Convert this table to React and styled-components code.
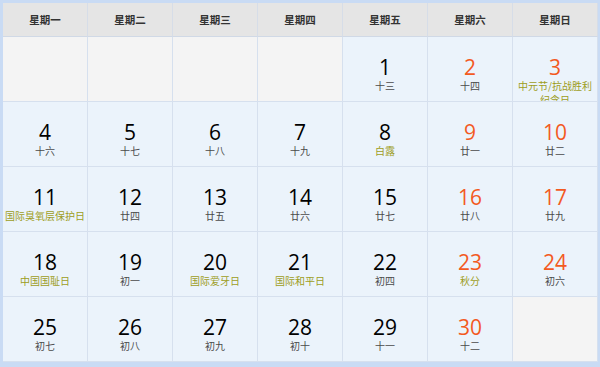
import React from "react"
import styled, { createGlobalStyle } from "styled-components"

const GlobalStyle = createGlobalStyle`
  html, body {
    margin: 0;
    padding: 0;
    background: #ffffff;
  }
  body {
    font-family: "Noto Sans CJK SC", "Open Sans", sans-serif;
  }
`

const weekdays = ["星期一", "星期二", "星期三", "星期四", "星期五", "星期六", "星期日"]

// [day, text, isFestival]
const days = [
  null, null, null, null,
  [1, "十三"], [2, "十四"], [3, "中元节/抗战胜利纪念日", true],
  [4, "十六"], [5, "十七"], [6, "十八"], [7, "十九"], [8, "白露", true], [9, "廿一"], [10, "廿二"],
  [11, "国际臭氧层保护日", true], [12, "廿四"], [13, "廿五"], [14, "廿六"], [15, "廿七"], [16, "廿八"], [17, "廿九"],
  [18, "中国国耻日", true], [19, "初一"], [20, "国际爱牙日", true], [21, "国际和平日", true], [22, "初四"], [23, "秋分", true], [24, "初六"],
  [25, "初七"], [26, "初八"], [27, "初九"], [28, "初十"], [29, "十一"], [30, "十二"],
  null,
]

const App = () => {
  return (
    <>
      <GlobalStyle />
      <Calendar>
        {weekdays.map(w => (
          <HeadCell key={w}>{w}</HeadCell>
        ))}
        {days.map((d, i) => {
          if (!d) return <EmptyCell key={"e" + i} />
          const [day, text, fest] = d
          const weekend = i % 7 >= 5
          return (
            <DayCell key={day}>
              <Num $weekend={weekend}>{day}</Num>
              <Sub $fest={fest}>{text}</Sub>
            </DayCell>
          )
        })}
      </Calendar>
    </>
  )
}

export default App

const Calendar = styled.div`
  display: grid;
  grid-template-columns: repeat(7, 85px);
  grid-template-rows: 34px repeat(5, 65px);
  width: 595px;
  border-style: solid;
  border-color: #c9dbf4;
  border-width: 3px 2px 5px 3px;
  background: #d4dfee;
`

const HeadCell = styled.div`
  display: flex;
  align-items: center;
  justify-content: center;
  background: #e5e5e5;
  border-right: 1px solid #d6dde8;
  border-bottom: 1px solid #d0d9e6;
  font-size: 10.5px;
  font-weight: bold;
  color: #333333;
`

const EmptyCell = styled.div`
  background: #f4f4f4;
  border-right: 1px solid #d6e0ee;
  border-bottom: 1px solid #d6e0ee;
`

const DayCell = styled.div`
  display: flex;
  flex-direction: column;
  align-items: center;
  padding-top: 19px;
  box-sizing: border-box;
  overflow: hidden;
  background: #ebf3fb;
  border-right: 1px solid #d6e0ee;
  border-bottom: 1px solid #d6e0ee;
`

const Num = styled.div`
  font-family: "Open Sans", "Liberation Sans", sans-serif;
  font-size: 21px;
  font-weight: 500;
  line-height: 22px;
  color: ${props => (props.$weekend ? "#f35a1f" : "#000000")};
`

const Sub = styled.div`
  max-width: 81px;
  margin-top: 1px;
  text-align: center;
  font-size: 10px;
  line-height: 14px;
  color: ${props => (props.$fest ? "#9d9d1c" : "#4a4a4a")};
`
